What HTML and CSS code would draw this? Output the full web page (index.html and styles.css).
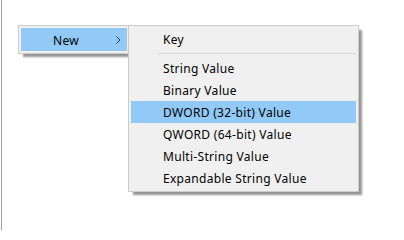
FILE: index.html
```html
<!DOCTYPE html>
<html>
<head>
<meta charset="utf-8">
<link rel="stylesheet" href="styles.css">
</head>
<body>
<div class="pane">
  <div class="menu parent-menu">
    <div class="item active">
      <span class="label">New</span>
      <svg class="chev" width="5" height="8" viewBox="0 0 5 8"><path d="M0.5 0.5 L4 4 L0.5 7.5" fill="none" stroke="#333" stroke-width="1"/></svg>
    </div>
  </div>
  <div class="menu sub-menu">
    <div class="item">Key</div>
    <div class="sep"></div>
    <div class="item">String Value</div>
    <div class="item">Binary Value</div>
    <div class="item active">DWORD (32-bit) Value</div>
    <div class="item">QWORD (64-bit) Value</div>
    <div class="item">Multi-String Value</div>
    <div class="item">Expandable String Value</div>
  </div>
</div>
</body>
</html>
```
FILE: styles.css
```css
html, body {
  margin: 0;
  padding: 0;
  background: #ffffff;
}
body {
  width: 404px;
  height: 230px;
  overflow: hidden;
  font-family: "Noto Sans", "Open Sans", sans-serif;
  font-size: 12px;
  letter-spacing: 0.3px;
  color: #000;
}
.pane {
  position: relative;
  margin-left: 1px;
  height: 230px;
  border-left: 1px solid #a0a0a0;
}
.menu {
  position: absolute;
  background: #f0f0f0;
  border: 1px solid #cccccc;
  padding: 2px;
  box-sizing: border-box;
  box-shadow: 4px 4px 2px -1px rgba(0, 0, 0, 0.42);
}
.parent-menu {
  left: 16px;
  top: 25px;
  width: 112px;
  height: 29px;
}
.parent-menu .item {
  height: 23px;
  display: flex;
  align-items: center;
  padding-left: 32px;
  padding-right: 6px;
  padding-top: 1px;
  box-sizing: border-box;
}
.parent-menu .label {
  flex: 1;
}
.sub-menu {
  left: 126px;
  top: 25px;
  width: 231px;
  height: 167px;
}
.sub-menu .item {
  height: 22px;
  line-height: 23px;
  padding-left: 32px;
  white-space: nowrap;
}
.item.active {
  background: #91c9f7;
}
.sep {
  height: 1px;
  background: #d7d7d7;
  margin: 3px 0 3px 27px;
}
```
